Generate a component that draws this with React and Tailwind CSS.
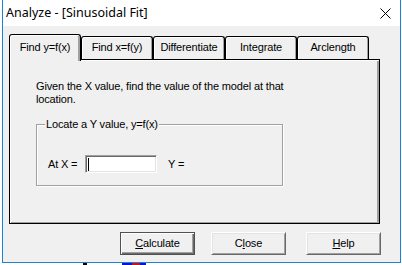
const tabs = ['Find y=f(x)', 'Find x=f(y)', 'Differentiate', 'Integrate', 'Arclength'];

function Tab({ label, active }) {
  if (active) {
    return (
      <div className="relative z-10 -mb-[2px] h-[27px] w-[72px] rounded-t-[3px] border-x border-t border-black bg-[#f0f0f0] pt-[6px] text-center shadow-[inset_1px_1px_0_#fff,inset_-2px_0_0_#a0a0a0]">
        {label}
      </div>
    );
  }
  return (
    <div className="h-[23px] w-[72px] rounded-t-[3px] border-x border-t border-black bg-[#f0f0f0] pt-[4px] text-center shadow-[inset_1px_1px_0_#fff,inset_-1px_0_0_#a0a0a0]">
      {label}
    </div>
  );
}

function Button({ children, isDefault, className = '' }) {
  return (
    <div
      className={`flex h-[23px] w-[75px] items-center justify-center ${
        isDefault
          ? 'border border-[#505050] shadow-[inset_1px_1px_0_#fff,inset_-1px_-1px_0_#696969,inset_-2px_-2px_0_#a0a0a0]'
          : 'border border-t-white border-l-white border-r-[#696969] border-b-[#696969] shadow-[inset_1px_1px_0_#e3e3e3,inset_-1px_-1px_0_#a0a0a0]'
      } ${className}`}
    >
      {children}
    </div>
  );
}

export default function App() {
  return (
    <div className="flex h-[265px] w-[402px] flex-col overflow-hidden bg-white font-['Liberation_Sans',Arial,sans-serif] text-[11px] leading-[13px] tracking-[-0.15px] text-black">
      <div className="ml-[2px] flex h-[263px] w-[399px] flex-col border-x border-b border-[#1883d7] bg-[#f0f0f0]">
        <div className="flex h-[26px] shrink-0 items-start justify-between bg-white pl-[3px] pr-[9px]">
          <span className="pt-[5px] font-['Noto_Sans',sans-serif] text-[12.5px] leading-[16px] tracking-normal">
            Analyze - [Sinusoidal Fit]
          </span>
          <svg width="11" height="11" viewBox="0 0 11 11" className="mt-[8px]">
            <path d="M0.5 0.5 L10.5 10.5 M10.5 0.5 L0.5 10.5" stroke="#000" strokeWidth="1" fill="none" />
          </svg>
        </div>

        <div className="ml-[6px] mt-[8px] flex h-[25px] items-end">
          {tabs.map((t, i) => (
            <Tab key={t} label={t} active={i === 0} />
          ))}
        </div>

        <div className="ml-[6px] h-[165px] w-[371px] border border-black pl-[26px] pt-[20px] shadow-[inset_1px_1px_0_#fff,inset_-2px_-1px_0_#a0a0a0]">
          <p className="w-[262px]">Given the X value, find the value of the model at that location.</p>

          <div className="relative mt-[18px] h-[62px] w-[247px] border border-[#a0a0a0] shadow-[1px_1px_0_#fff,inset_1px_1px_0_#fff]">
            <span className="absolute -top-[7px] left-[8px] bg-[#f0f0f0] px-[1px]">Locate a Y value, y=f(x)</span>
            <div className="flex items-center pl-[11px] pt-[30px]">
              <span className="w-[37px]">At X =</span>
              <div className="flex h-[18px] w-[72px] items-center border border-t-[#a0a0a0] border-l-[#a0a0a0] border-r-white border-b-white bg-white pl-[2px] shadow-[inset_1px_1px_0_#696969,inset_-1px_-1px_0_#e3e3e3]">
                <span className="h-[13px] w-[1px] bg-black" />
              </div>
              <span className="ml-[11px]">Y =</span>
            </div>
          </div>
        </div>

        <div className="mt-[8px] flex pl-[117px]">
          <Button isDefault>
            <span><span className="underline">C</span>alculate</span>
          </Button>
          <Button className="ml-[16px]">
            <span>C<span className="underline">l</span>ose</span>
          </Button>
          <Button className="ml-[20px]">
            <span><span className="underline">H</span>elp</span>
          </Button>
        </div>
      </div>

      <div className="flex h-[2px]">
        <span className="ml-[83px] h-[2px] w-[4px] bg-black" />
        <span className="ml-[35px] h-[2px] w-[10px] bg-[#1010d0]" />
        <span className="h-[2px] w-[8px] bg-[#d01010]" />
        <span className="h-[2px] w-[6px] bg-[#1010d0]" />
      </div>
    </div>
  );
}
